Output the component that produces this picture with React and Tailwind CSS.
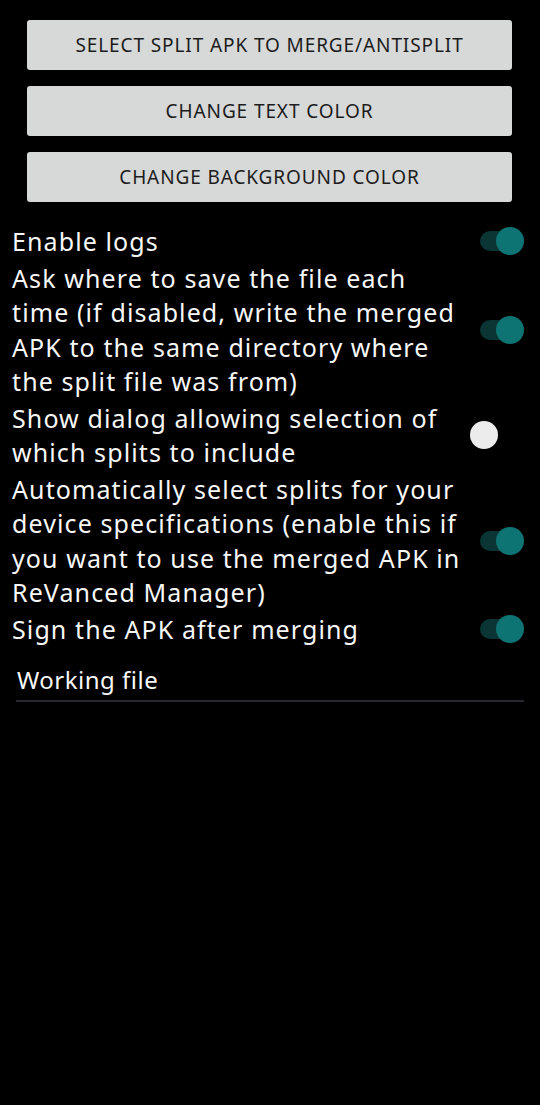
import React, { useState } from 'react';

const buttons = [
  'SELECT SPLIT APK TO MERGE/ANTISPLIT',
  'CHANGE TEXT COLOR',
  'CHANGE BACKGROUND COLOR',
];

const options = [
  { lines: ['Enable logs'], on: true },
  {
    lines: [
      'Ask where to save the file each',
      'time (if disabled, write the merged',
      'APK to the same directory where',
      'the split file was from)',
    ],
    on: true,
  },
  { lines: ['Show dialog allowing selection of', 'which splits to include'], on: false },
  {
    lines: [
      'Automatically select splits for your',
      'device specifications (enable this if',
      'you want to use the merged APK in',
      'ReVanced Manager)',
    ],
    on: true,
  },
  { lines: ['Sign the APK after merging'], on: true },
];

const Toggle = ({ on, onClick }) => (
  <button onClick={onClick} className="relative w-[54px] h-[30px] shrink-0">
    {on ? (
      <>
        <span className="absolute left-[10px] top-[5px] w-[34px] h-[20px] rounded-full bg-[#0b3434]" />
        <span className="absolute right-0 top-[1px] w-[28px] h-[28px] rounded-full bg-[#0d7373]" />
      </>
    ) : (
      <span className="absolute left-0 top-[1px] w-[28px] h-[28px] rounded-full bg-[#ececec]" />
    )}
  </button>
);

export default function App() {
  const [state, setState] = useState(options.map(o => o.on));

  const toggle = i => setState(prev => prev.map((v, j) => (j === i ? !v : v)));

  return (
    <div
      className="min-h-[1105px] w-[540px] bg-black text-[#f7f7f7]"
      style={{ fontFamily: '"Noto Sans", sans-serif' }}
    >
      {/* Buttons */}
      <div className="flex flex-col gap-[16px] pt-[20px] pl-[27px] pr-[28px]">
        {buttons.map(label => (
          <button
            key={label}
            className="h-[50px] w-full rounded-[3px] bg-[#d7d8d8] text-[#1c1c1c] text-[19px] tracking-[0.9px]"
          >
            {label}
          </button>
        ))}
      </div>

      {/* Options */}
      <div className="flex flex-col gap-[2px] mt-[22px] pl-[12px] pr-[16px]">
        {options.map((opt, i) => (
          <div key={i} className="flex items-center justify-between">
            <div className="text-[25px] leading-[34.5px] tracking-[1.1px]">
              {opt.lines.map(line => (
                <span key={line} className="block whitespace-nowrap">{line}</span>
              ))}
            </div>
            <Toggle on={state[i]} onClick={() => toggle(i)} />
          </div>
        ))}
      </div>

      {/* Working file */}
      <div className="mx-[16px] mt-[19px] border-b-2 border-[#262a30] pl-[1px] pb-[5px]">
        <span className="text-[24px] leading-[30px] tracking-[0.5px]">Working file</span>
      </div>
    </div>
  );
}
